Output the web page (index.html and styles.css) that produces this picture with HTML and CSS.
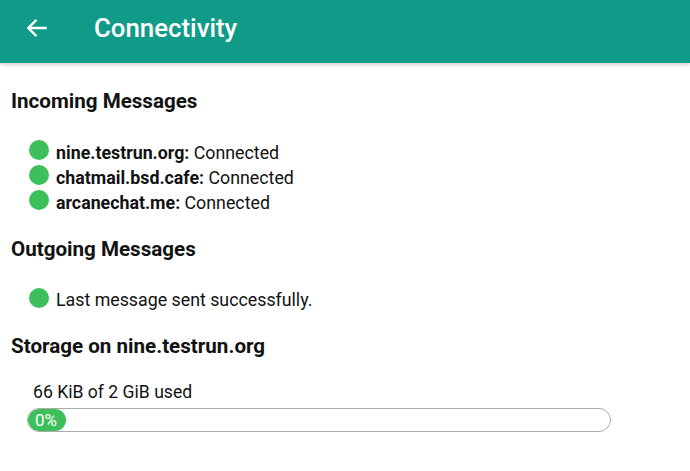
FILE: index.html
```html
<!DOCTYPE html>
<html>
<head>
<meta charset="utf-8">
<link rel="stylesheet" href="styles.css">
</head>
<body>
<header class="appbar">
  <svg class="back" width="24" height="24" viewBox="0 0 24 24"><path d="M21 12H4M11.5 4.5L4 12l7.5 7.5" fill="none" stroke="#fff" stroke-width="2.2" stroke-linecap="butt" stroke-linejoin="miter"/></svg>
  <h1 class="title">Connectivity</h1>
</header>
<main class="content">
  <h2 class="heading">Incoming Messages</h2>
  <ul class="list">
    <li class="item"><span class="dot"></span><b>nine.testrun.org:</b>&nbsp;Connected</li>
    <li class="item"><span class="dot"></span><b>chatmail.bsd.cafe:</b>&nbsp;Connected</li>
    <li class="item"><span class="dot"></span><b>arcanechat.me:</b>&nbsp;Connected</li>
  </ul>
  <h2 class="heading">Outgoing Messages</h2>
  <ul class="list">
    <li class="item"><span class="dot"></span>Last message sent successfully.</li>
  </ul>
  <h2 class="heading">Storage on nine.testrun.org</h2>
  <div class="storage">
    <div class="used">66 KiB of 2 GiB used</div>
    <div class="bar"><div class="fill">0%</div></div>
  </div>
</main>
</body>
</html>
```
FILE: styles.css
```css
html, body { margin: 0; padding: 0; background: #fff; }
body { font-family: Roboto, "Liberation Sans", sans-serif; color: #121212; width: 690px; height: 471px; overflow: hidden; }
.appbar {
  height: 63px;
  box-sizing: border-box;
  padding: 0 0 7px 24px;
  background: #109a88;
  display: flex;
  align-items: center;
  box-shadow: 0 2px 4px rgba(0,0,0,0.18);
}
.back { width: 26px; height: 26px; flex: none; }
.title {
  margin: 0 0 0 44px;
  color: #fff;
  font-size: 25.8px;
  font-weight: 500;
}
.content { padding: 26px 11px 0 11px; }
.heading {
  margin: 0;
  font-size: 20.6px;
  font-weight: 700;
  line-height: 24px;
}
.list { list-style: none; margin: 26.5px 0 22px 18px; padding: 0; }
.item {
  display: flex;
  align-items: center;
  font-size: 17.8px;
  line-height: 25px;
  height: 25px;
}
.item b { font-weight: 700; }
.dot {
  width: 20px; height: 20px;
  border-radius: 50%;
  background: #3dbf5c;
  margin-right: 7px;
  margin-top: -4px;
  flex: none;
}
.storage { padding: 24px 0 0 16px; }
.used { font-size: 17.6px; line-height: 20px; margin-left: 6px; }
.bar {
  margin-top: 6px;
  width: 582px;
  height: 22px;
  border: 1px solid #aaa;
  border-radius: 12px;
  overflow: hidden;
}
.fill {
  width: 38px;
  height: 100%;
  background: #3dbf5c;
  color: #fff;
  font-size: 17px;
  line-height: 22px;
  padding-left: 7px;
  box-sizing: border-box;
  border-radius: 12px;
}
```
